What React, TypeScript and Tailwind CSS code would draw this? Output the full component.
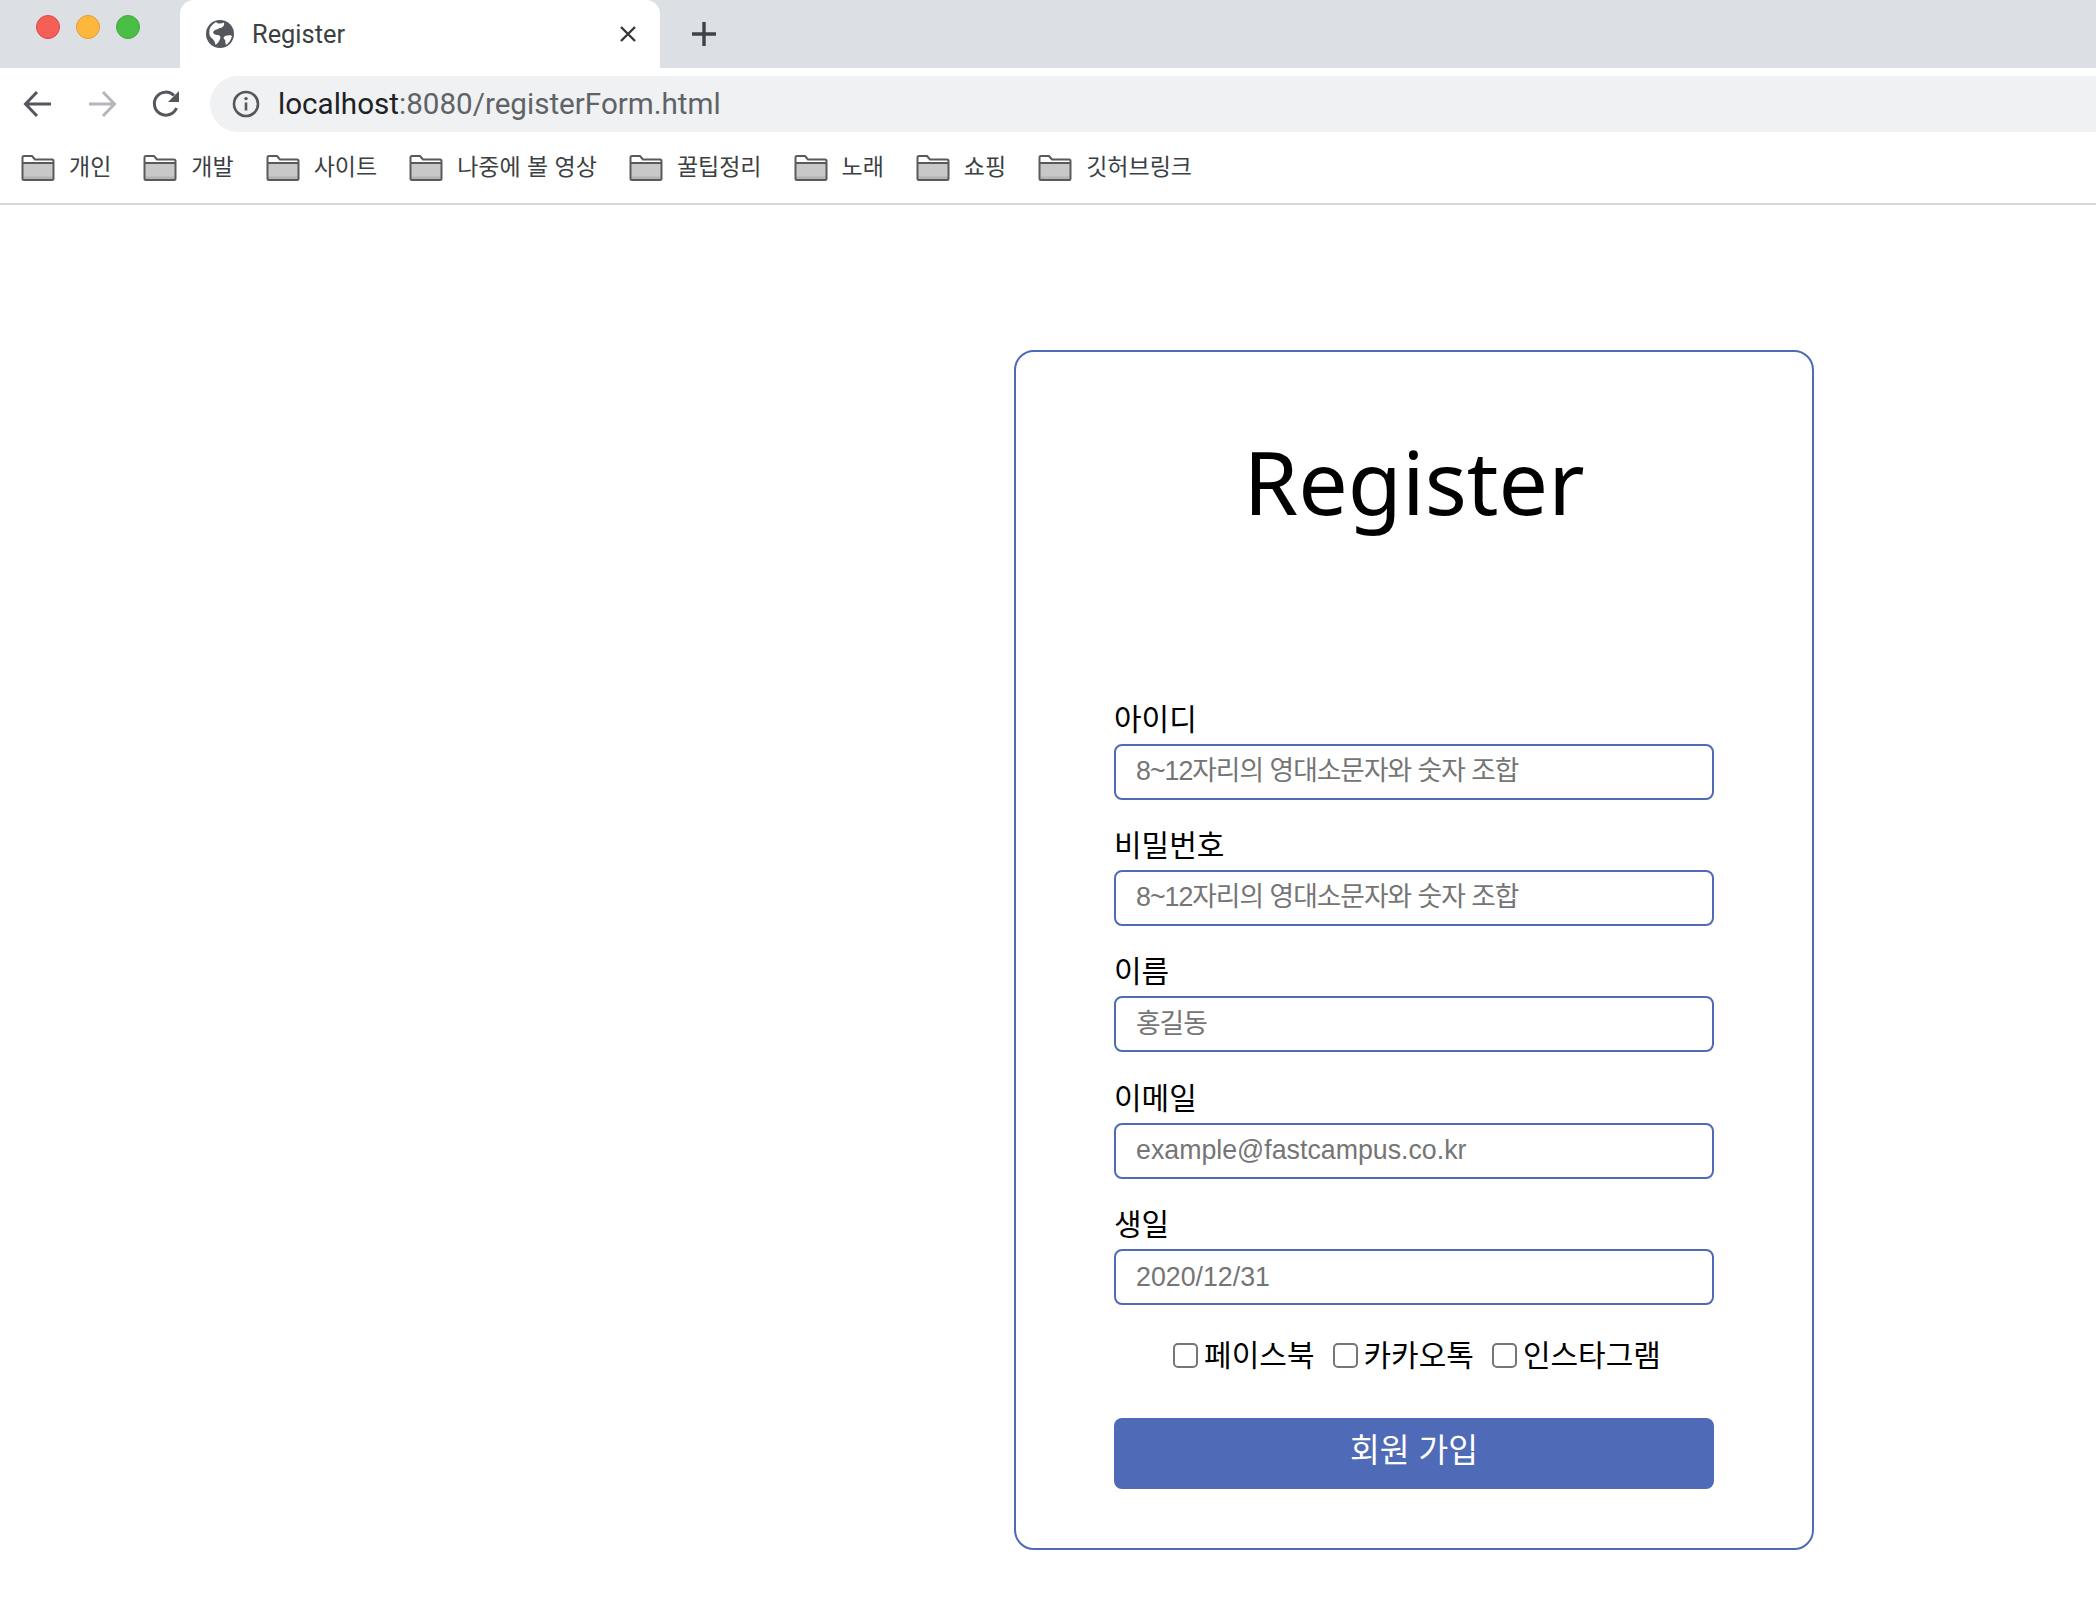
const SANS = "font-['Liberation_Sans','Noto_Sans_CJK_KR',sans-serif]";

const bookmarks = ["개인", "개발", "사이트", "나중에 볼 영상", "꿀팁정리", "노래", "쇼핑", "깃허브링크"];

const fields = [
  { label: "아이디", placeholder: "8~12자리의 영대소문자와 숫자 조합", tight: true },
  { label: "비밀번호", placeholder: "8~12자리의 영대소문자와 숫자 조합", tight: true },
  { label: "이름", placeholder: "홍길동", tight: true },
  { label: "이메일", placeholder: "example@fastcampus.co.kr", tight: false },
  { label: "생일", placeholder: "2020/12/31", tight: false },
];

const socials = ["페이스북", "카카오톡", "인스타그램"];

function FolderIcon() {
  return (
    <svg width="34" height="26" viewBox="0 0 34 26" className="shrink-0">
      <path d="M1.5 24.5V2.5Q1.5 1 3 1H11L14 4.5H31Q32.5 4.5 32.5 6V24.5Z" fill="#fff" />
      <path d="M1.5 8H32.5V24.5H1.5Z" fill="#c8c8c8" />
      <path d="M1.5 21.5H32.5V24.5H1.5Z" fill="#b4b4b4" />
      <path
        d="M1.5 8H32.5M3 25H31Q32.5 25 32.5 23.5V6Q32.5 4.5 31 4.5H14L11 1H3Q1.5 1 1.5 2.5V23.5Q1.5 25 3 25Z"
        fill="none"
        stroke="#5a5a5a"
        strokeWidth="2"
      />
    </svg>
  );
}

function GlobeIcon() {
  return (
    <svg width="28" height="28" viewBox="0 0 28 28">
      <circle cx="14" cy="14" r="14" fill="#54575c" />
      <path
        d="M10 2C12 4 15 4 18 2.500C19 6 16 8 13.500 8C12 10 9 9 8 11C6 12 8 15 11 15C14 15 15 17 14 19C13 22 11 24 9.500 25C9 21 7 19 4.500 17C3 15 3 11 4 8C5 6 7 4 10 2ZM19 16C22 15 25 15 26 16C25 20 23 23 20 25C19 22 20 20 18 19C17 18 18 17 19 16Z"
        fill="#fff"
      />
    </svg>
  );
}

function TabBar() {
  return (
    <div className="flex h-[68px] bg-[#dcdfe4]">
      <div className="relative w-[180px] shrink-0">
        <div className="absolute top-[15px] left-[36px] flex gap-[16px]">
          <span className="size-[24px] rounded-full bg-[#f65f57] border border-[#e0443e]" />
          <span className="size-[24px] rounded-full bg-[#fdb73d] border border-[#dea034]" />
          <span className="size-[24px] rounded-full bg-[#4abd46] border border-[#3fa93b]" />
        </div>
      </div>
      <div className="flex w-[480px] shrink-0 items-center rounded-t-[14px] bg-white pl-[26px] pr-[23px]">
        <GlobeIcon />
        <span className="ml-[18px] text-[25.4px] text-[#3c3f43] font-['Roboto',sans-serif]">Register</span>
        <svg width="18" height="18" viewBox="0 0 18 18" className="ml-auto">
          <path d="M2 2L16 16M16 2L2 16" stroke="#35383c" strokeWidth="2.4" />
        </svg>
      </div>
      <div className="flex items-center pl-[31px]">
        <svg width="26" height="26" viewBox="0 0 26 26">
          <path d="M13 1V25M1 13H25" stroke="#3f4246" strokeWidth="3.4" />
        </svg>
      </div>
    </div>
  );
}

function Toolbar() {
  return (
    <div className="flex h-[71px] items-center pl-[23px]">
      <svg width="30" height="28" viewBox="0 0 30 28">
        <path d="M28 14H3M14 2L2.5 14L14 26" fill="none" stroke="#54575c" strokeWidth="3" />
      </svg>
      <svg width="30" height="28" viewBox="0 0 30 28" className="ml-[34px]">
        <path d="M2 14H27M16 2L27.5 14L16 26" fill="none" stroke="#b4b6b9" strokeWidth="3" />
      </svg>
      <svg width="30" height="30" viewBox="0 0 30 30" className="ml-[34px]">
        <path d="M25.5 19A11.5 11.5 0 1 1 23 6.5" fill="none" stroke="#54575c" strokeWidth="3" />
        <path d="M28 2V13H17Z" fill="#54575c" />
      </svg>
      <div className="ml-[29px] flex h-[56px] flex-1 items-center rounded-l-[28px] bg-[#eff1f3] pl-[22px]">
        <svg width="28" height="28" viewBox="0 0 28 28">
          <circle cx="14" cy="14" r="12" fill="none" stroke="#54575c" strokeWidth="2.6" />
          <path d="M14 12.5V20.5" stroke="#54575c" strokeWidth="2.6" />
          <circle cx="14" cy="8.6" r="1.7" fill="#54575c" />
        </svg>
        <span className="ml-[18px] pt-[2px] text-[29.6px] text-[#202124] font-['Roboto',sans-serif]">
          localhost<span className="text-[#5f6368]">:8080/registerForm.html</span>
        </span>
      </div>
    </div>
  );
}

function BookmarksBar() {
  return (
    <div className="flex h-[66px] items-center gap-[32px] border-b-2 border-[#d6d6d6] pl-[21px] pb-[6px]">
      {bookmarks.map((name) => (
        <div key={name} className="flex items-center gap-[14px]">
          <FolderIcon />
          <span className={`${SANS} text-[23px] text-[#3c3f43] -translate-y-[1px]`}>{name}</span>
        </div>
      ))}
    </div>
  );
}

function Field({ label, placeholder, tight }: { label: string; placeholder: string; tight: boolean }) {
  return (
    <div className="flex flex-col">
      <label className={`${SANS} h-[45px] text-[30px] leading-[42px] text-black`}>{label}</label>
      <input
        readOnly
        placeholder={placeholder}
        className={`${SANS} ${tight ? "tracking-[-1px]" : ""} h-[56px] w-[600px] rounded-[8px] border-2 border-[#4f6bb7] px-[20px] text-[26.75px] placeholder:text-[#757575] outline-none`}
      />
    </div>
  );
}

export default function App() {
  return (
    <div className="min-h-[1618px] bg-white">
      <TabBar />
      <Toolbar />
      <BookmarksBar />
      <main className="flex justify-end pt-[145px] pr-[282px]">
        <form className="flex h-[1200px] w-[800px] flex-col items-center rounded-[20px] border-2 border-[#4f6bb7] px-[98px]">
          <h1 className="mt-[65px] h-[128px] text-[88px] leading-[128px] text-black font-['Noto_Sans',sans-serif]">
            Register
          </h1>
          <div className="mt-[153.5px] flex w-[600px] flex-col gap-[25.4px]">
            {fields.map((f) => (
              <Field key={f.label} {...f} />
            ))}
          </div>
          <div className={`${SANS} mt-[28px] ml-[6px] flex items-center gap-[18px] text-[30px] text-black`}>
            {socials.map((s) => (
              <label key={s} className="flex items-center gap-[6px]">
                <span className="size-[25px] rounded-[5px] border-2 border-[#767676] bg-white" />
                {s}
              </label>
            ))}
          </div>
          <button
            type="button"
            className={`${SANS} mt-[39.5px] h-[71px] w-[600px] rounded-[8px] bg-[#4f6bb7] pb-[3px] text-[32.4px] text-white`}
          >
            회원 가입
          </button>
        </form>
      </main>
    </div>
  );
}
